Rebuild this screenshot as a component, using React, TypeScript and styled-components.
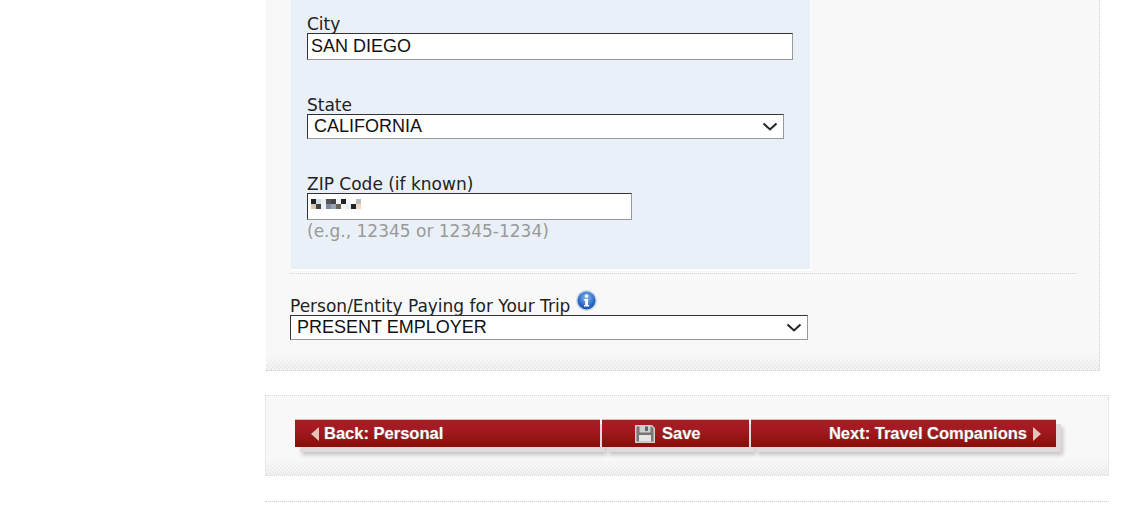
import React from "react";
import styled, { createGlobalStyle } from "styled-components";

const Global = createGlobalStyle`
  html, body { margin: 0; padding: 0; background: #fff; overflow: hidden; }
  body { font-family: "DejaVu Sans", Verdana, sans-serif; }
  #root { height: 515px; overflow: hidden; }
`;

const Page = styled.main`
  width: 844px;
  margin-left: 265px;
`;

const texture = `
  linear-gradient(to bottom, #f8f8f8 0%, rgba(248,248,248,0) 100%),
  repeating-conic-gradient(#e8e8e8 0 25%, #f3f3f3 0 50%) 0 0 / 4px 4px
`;

const Panel = styled.section`
  box-sizing: border-box;
  margin-left: 1px;
  width: 834px;
  height: 371px;
  padding-left: 25px;
  background: #f8f8f8;
  border-right: 1px dotted #ccc;
  border-bottom: 1px dotted #ccc;
  position: relative;
  &::after {
    content: "";
    position: absolute;
    left: 0;
    right: 0;
    bottom: 0;
    height: 16px;
    background: ${texture};
  }
`;

const AddressBox = styled.div`
  box-sizing: border-box;
  width: 520px;
  height: 271px;
  padding: 15px 0 0 16px;
  background: #e9f0f7;
  border-right: 1px solid #fff;
  border-bottom: 2px solid #fff;
`;

const Field = styled.div<{ $gap?: number }>`
  display: block;
  margin-bottom: ${(p) => p.$gap ?? 0}px;
`;

const Label = styled.label`
  display: block;
  height: 18px;
  font-size: 17px;
  line-height: 18px;
  color: #222;
  white-space: nowrap;
`;

const TextInput = styled.input<{ $w: number }>`
  display: block;
  box-sizing: border-box;
  width: ${(p) => p.$w}px;
  height: 27px;
  margin: 0;
  padding: 0 3px;
  background: #fff;
  border: 1px solid;
  border-color: #333 #999 #999 #333;
  border-radius: 0;
  outline: none;
  font-family: "Liberation Sans", Arial, sans-serif;
  font-size: 18px;
  color: #111;
`;

const SelectWrap = styled.div<{ $w: number }>`
  position: relative;
  width: ${(p) => p.$w}px;
`;

const Select = styled.select`
  display: block;
  box-sizing: border-box;
  appearance: none;
  width: 100%;
  height: 25px;
  margin: 0;
  padding: 0 0 1px 6px;
  background: #fff;
  border: 1px solid;
  border-color: #333 #999 #999 #333;
  border-radius: 0;
  outline: none;
  font-family: "Liberation Sans", Arial, sans-serif;
  font-size: 18px;
  color: #111;
`;

const Chevron = styled.svg`
  position: absolute;
  right: 6px;
  top: 8px;
  pointer-events: none;
`;

const MaskedWrap = styled.div`
  position: relative;
  width: 325px;
`;

const Mosaic = styled.svg`
  position: absolute;
  left: 4px;
  top: 5px;
`;

const Hint = styled.div`
  margin-top: 1px;
  height: 20px;
  font-size: 17px;
  line-height: 20px;
  color: #999;
  white-space: nowrap;
`;

const Divider = styled.hr`
  width: 787px;
  margin: 2px 0 0 -1px;
  border: 0;
  border-top: 1px dotted #d4d4d4;
`;

const PayerField = styled.div`
  margin: 15px 0 0 -1px;
`;

const PayerLabel = styled.label`
  display: flex;
  align-items: flex-end;
  gap: 6px;
  height: 26px;
  font-size: 17px;
  line-height: 20px;
  color: #222;
  white-space: nowrap;
`;

const PayerText = styled.span`
  margin-bottom: -1px;
`;

const Info = styled.svg`
  margin-bottom: 4px;
`;

const NavPanel = styled.nav`
  box-sizing: border-box;
  width: 844px;
  height: 81px;
  margin-top: 24px;
  padding: 23px 0 0 29px;
  background: #f8f8f8;
  border: 1px dotted #d8d8d0;
  position: relative;
  &::after {
    content: "";
    position: absolute;
    left: 0;
    right: 0;
    bottom: 0;
    height: 16px;
    background: ${texture};
  }
`;

const Buttons = styled.div`
  display: flex;
  gap: 2px;
  position: relative;
  z-index: 1;
`;

const Button = styled.button<{ $w: number; $align: string; $pad: string; $gap: number }>`
  box-sizing: border-box;
  display: flex;
  align-items: center;
  justify-content: ${(p) => p.$align};
  gap: ${(p) => p.$gap}px;
  width: ${(p) => p.$w}px;
  height: 28px;
  padding: ${(p) => p.$pad};
  border: 0;
  border-top: 1px solid #dcb8b8;
  background: linear-gradient(to bottom, #a81c24 0%, #a41a22 35%, #860f06 100%);
  box-shadow: 5px 5px 0 #e2dada, 7px 8px 4px #c4c4c4;
  color: #fff;
  font-family: "Liberation Sans", Arial, sans-serif;
  font-size: 16.5px;
  font-weight: 700;
  text-shadow: 0 0 1px #3a0000, 0 0 1px #fff;
  white-space: nowrap;
`;

const Rule = styled.hr`
  width: 844px;
  margin: 25px 0 0;
  border: 0;
  border-top: 1px dotted #ccc;
`;

const mosaic: [number, number, string][] = [
  [0, 0, "#222"], [5, 0, "#cfe0ea"], [10, 0, "#eef0ec"], [15, 0, "#555"], [20, 0, "#444"], [25, 0, "#eef4f8"],
  [30, 0, "#222"], [35, 0, "#f2f8fa"], [40, 0, "#fff"], [45, 0, "#bbb"],
  [0, 5, "#d8c8b0"], [5, 5, "#444"], [10, 5, "#eef3f6"], [15, 5, "#8088a0"], [20, 5, "#9aa4b0"], [25, 5, "#6a6454"],
  [30, 5, "#edf6fa"], [35, 5, "#e6f0f4"], [40, 5, "#222"], [45, 5, "#f3d8c4"],
];

const Left = () => (
  <svg width="9" height="14" viewBox="0 0 9 14"><path d="M8 0v14L0 7z" fill="#e7c3b8" /></svg>
);
const Right = () => (
  <svg width="9" height="14" viewBox="0 0 9 14"><path d="M1 0v14l8-7z" fill="#e7c3b8" /></svg>
);
const Arrow = () => (
  <Chevron width="16" height="9" viewBox="0 0 16 9" aria-hidden="true">
    <path d="M1.500 1.500L8 7.500l6.500-6" fill="none" stroke="#222" strokeWidth="2" />
  </Chevron>
);

export default function App() {
  return (
    <Page>
      <Global />
      <Panel>
        <AddressBox>
          <Field $gap={36}>
            <Label htmlFor="city">City</Label>
            <TextInput id="city" $w={486} defaultValue="SAN DIEGO" />
          </Field>
          <Field $gap={36}>
            <Label htmlFor="state">State</Label>
            <SelectWrap $w={477}>
              <Select id="state" defaultValue="CALIFORNIA">
                <option>CALIFORNIA</option>
              </Select>
              <Arrow />
            </SelectWrap>
          </Field>
          <Field>
            <Label htmlFor="zip">ZIP Code (if known)</Label>
            <MaskedWrap>
              <TextInput id="zip" $w={325} />
              <Mosaic width="50" height="15" viewBox="0 0 50 15" aria-hidden="true">
                {mosaic.map(([x, y, c]) => (
                  <rect key={`${x}-${y}`} x={x} y={y + 1} width="5" height="5" fill={c} />
                ))}
              </Mosaic>
            </MaskedWrap>
            <Hint>(e.g., 12345 or 12345-1234)</Hint>
          </Field>
        </AddressBox>
        <Divider />
        <PayerField>
          <PayerLabel htmlFor="payer">
            <PayerText>Person/Entity Paying for Your Trip</PayerText>
            <Info width="21" height="21" viewBox="0 0 21 21" aria-hidden="true">
              <defs>
                <radialGradient id="inf" cx="50%" cy="35%" r="65%">
                  <stop offset="0" stopColor="#8fbcf0" />
                  <stop offset="0.7" stopColor="#2a6cc8" />
                  <stop offset="1" stopColor="#1c4f9e" />
                </radialGradient>
              </defs>
              <circle cx="10.5" cy="10.5" r="10.5" fill="#c7d7ea" />
              <circle cx="10.5" cy="10.5" r="9" fill="url(#inf)" />
              <circle cx="10.5" cy="6" r="1.8" fill="#fff" />
              <path d="M8 9h4v6h1.200v1.500H8V15h1.200v-4.500H8z" fill="#fff" />
            </Info>
          </PayerLabel>
          <SelectWrap $w={518}>
            <Select id="payer" defaultValue="PRESENT EMPLOYER">
              <option>PRESENT EMPLOYER</option>
            </Select>
            <Arrow />
          </SelectWrap>
        </PayerField>
      </Panel>
      <NavPanel>
        <Buttons>
          <Button $w={305} $align="flex-start" $pad="0 0 0 16px" $gap={4} type="button">
            <Left />
            Back: Personal
          </Button>
          <Button $w={147} $align="flex-start" $pad="0 0 0 33px" $gap={7} type="button">
            <svg width="20" height="19" viewBox="0 0 20 19" aria-hidden="true">
              <path d="M0 1h17l3 3v15H0z" fill="#cfcfcf" />
              <path d="M1.500 2.500h3v6h11v-6h1l2 2v13h-17z" fill="#777" />
              <rect x="10" y="2.500" width="3" height="4.500" fill="#666" />
              <rect x="4" y="11" width="12" height="6.500" fill="#e6e6e6" />
            </svg>
            Save
          </Button>
          <Button $w={305} $align="flex-end" $pad="0 15px 0 0" $gap={5} type="button">
            Next: Travel Companions
            <Right />
          </Button>
        </Buttons>
      </NavPanel>
      <Rule />
    </Page>
  );
}
